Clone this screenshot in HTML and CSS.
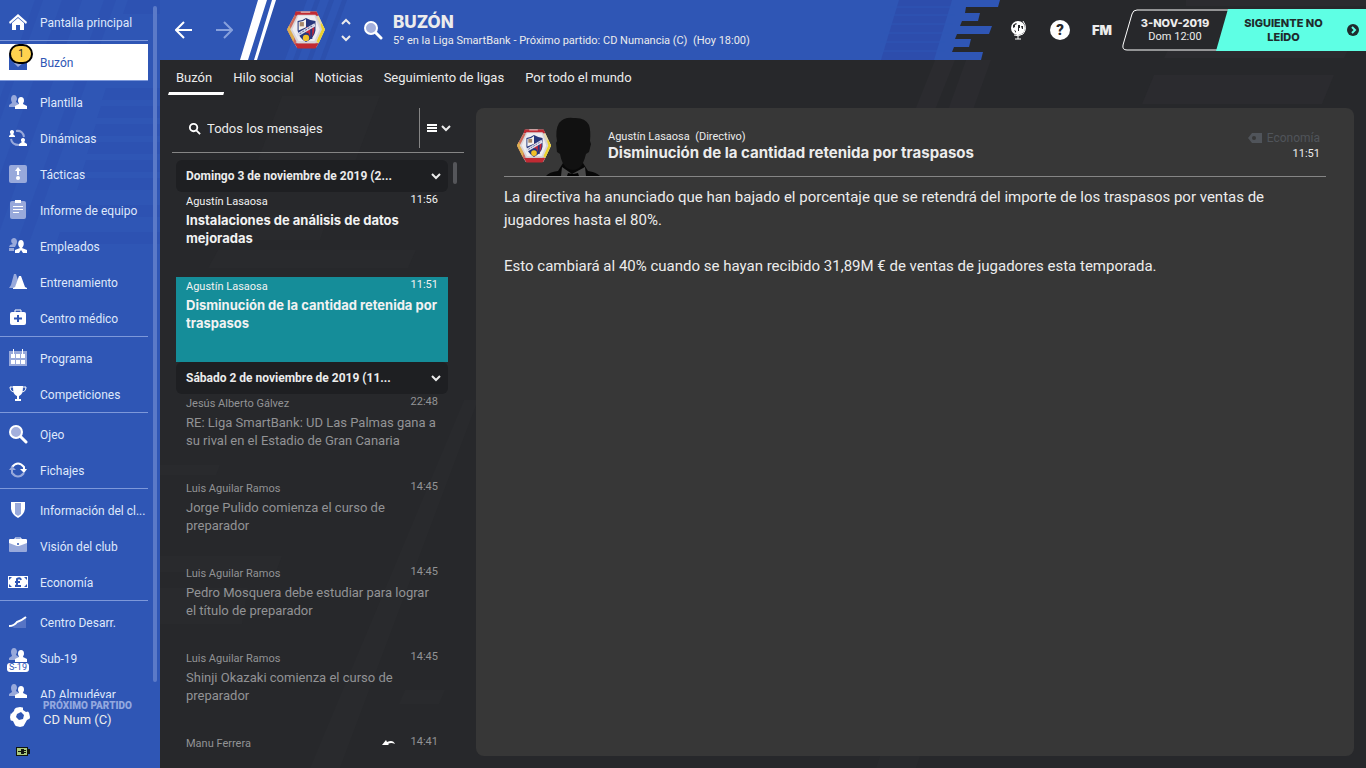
FILE: index.html
```html
<!DOCTYPE html>
<html lang="es">
<head>
    <meta charset="utf-8">
    <meta name="viewport" content="width=device-width, initial-scale=1">
    <title>Buzón</title>
    <link rel="stylesheet" href="styles.css">
</head>
<body>
    <!-- Shared symbols -->
    <svg class="symbols" aria-hidden="true">
        <symbol id="crest" viewBox="1 2 38 37">
            <path d="M11 3h19l8 17-8 17H11L2 20z" fill="#c9c4c4"/>
            <path d="M10 3h20l2 4H9z" fill="#c02a33"/>
            <path d="M15 3h9v1h-9z" fill="#ead9d6"/>
            <path d="M9 33h23l-3 5H12z" fill="#c02a33"/>
            <path d="M2 20l7-13 3 1-6 12 5 12-2 2z" fill="#cf6a5c"/>
            <path d="M2 20l2-4 2 4 3 8-1 4z" fill="#dcae4e"/>
            <path d="M32 7l6 13-6 13-3-1 6-12-5-12z" fill="#e6d9a8"/>
            <path d="M35 14l3 6-6 13-2-2 5-11-1-5z" fill="#ecd22f"/>
            <path d="M12 6h17l6 14-6 13H12L5 20z" fill="#d8d5da"/>
            <path d="M13 7h15l5 13-5 11H13L7 20z" fill="#efedf1"/>
            <path d="M12 12q4 0 8-3 5 3 9 3v9q-1 7-9 11-7-4-8-11z" fill="#27377c"/>
            <path d="M13 13q4 0 7-3v8l-7 3z" fill="#f5f2ef"/>
            <path d="M14 13h4v4h-4z" fill="#a7886a"/>
            <path d="M20 18h8q0 7-3 10l-3-5h-2z" fill="#c9283a"/>
            <path d="M25 19v10" stroke="#27377c" stroke-width="2"/>
            <path d="M11 24l17-10 1 3-17 10z" fill="#dfe1ee"/>
            <path d="M14 24l13-8" stroke="#68709c" stroke-dasharray="2 1"/>
            <circle cx="20" cy="28" r="3" fill="#f2bf27"/>
        </symbol>
        <symbol id="people" viewBox="0 0 20 20">
            <path d="M6 3c2 0 3 2 3 4 0 1-1 2-1 3l3 2v3H1v-2l3-2c0-1-1-2-1-4s1-4 3-4z" fill="#98a9db"/>
            <path d="M13 5c2 0 3 1 3 4 0 1-1 2-1 3l4 2v3H7v-3l4-2c0-1-1-2-1-3 0-3 1-4 3-4z" fill="#fff"/>
        </symbol>
        <symbol id="search" viewBox="0 0 20 20">
            <path d="M13 13l5 5" stroke="#fff" stroke-width="3" stroke-linecap="round"/>
            <circle cx="8" cy="8" r="6" fill="#a3afdc" stroke="#fff" stroke-width="2"/>
        </symbol>
        <symbol id="chevron" viewBox="0 0 12 12">
            <path d="M2 4l4 4 4-4" fill="none" stroke="currentColor" stroke-width="2"/>
        </symbol>
    </svg>

    <svg class="backdrop" viewBox="0 0 1366 768" preserveAspectRatio="none" aria-hidden="true">
        <g fill="#2b2b2f">
            <path d="M1154 75h180l-12 29h-180z"/>
            <path d="M1186 0h180v6h-180zM1168 50h180l-4 8h-180z"/>
            <path d="M935 60h20l-20 50h-20zM966 60h25l-18 50h-25z"/>
        </g>
        <g fill="#292a2d">
            <path d="M282 96h98l-34 90h-98zM218 250h198l-8 18H208zM220 210h110l-10 30H210z"/>
            <path d="M464 400h14L340 768h-30zM405 690h40l-6 14h-40z"/>
            <path d="M160 465h60l-4 10h-56zM160 556h122l-6 16H160zM160 588h88l-6 36h-82z"/>
            <path d="M880 756h40l-4 12h-40z"/>
        </g>
    </svg>

    <!-- Left menu -->
    <aside class="sidebar">
        <svg class="sidebar-pattern" viewBox="0 0 160 768" preserveAspectRatio="none" aria-hidden="true">
            <g fill="#2d52b2">
                <path d="M35 0h8L0 120V98zM62 0h20L0 230v-55zM104 0h12L30 240H18zM128 0h32v14h-37z"/>
                <path d="M106 88h54v12h-58zM101 106h59v12H97zM96 124h64v12H92zM91 142h69v12H87zM86 160h74v12H82zM81 178h79v12H77zM70 205h90v12H66zM60 232h100v12H56z"/>
            </g>
        </svg>
        <nav class="menu">
            <div class="menu-group">
                <a href="#"><svg class="icon" viewBox="0 0 20 20"><path d="M1 10l9-8 9 8-1 2-8-7-8 7z" fill="#fff"/><path d="M4 11l6-5 6 5v7h-4v-5H8v5H4z" fill="#fff"/></svg><span>Pantalla principal</span></a>
            </div>
            <div class="menu-group">
                <a href="#" class="current"><svg class="icon" viewBox="0 0 20 20"><path d="M1 3h18v15H1z" fill="#2f56b5"/><path d="M6 11l4 4 5-4z" fill="#98a9db"/></svg><b class="badge">1</b><span>Buzón</span></a>
            </div>
            <div class="menu-group">
                <a href="#"><svg class="icon"><use href="#people"/></svg><span>Plantilla</span></a>
                <a href="#"><svg class="icon" viewBox="0 0 20 20"><path d="M8 3q7-1 8 6M3 11q1 6 8 6" fill="none" stroke="#98a9db" stroke-width="2"/><path d="M4 2c3 0 2 4 1 4l2 2v1H1V8l2-2c-1 0-2-4 1-4zM15 10c3 0 2 4 1 4l3 2v2h-8v-2l3-2c-1 0-2-4 1-4z" fill="#fff"/></svg><span>Dinámicas</span></a>
                <a href="#"><svg class="icon" viewBox="0 0 20 20"><rect x="1" y="1" width="18" height="18" rx="2" fill="#98a9db"/><path d="M10 3l3 4h-2v4H9V7H7z" fill="#fff"/><circle cx="10" cy="14" r="2" fill="#fff"/></svg><span>Tácticas</span></a>
                <a href="#"><svg class="icon" viewBox="0 0 20 20"><rect x="2" y="1" width="16" height="18" rx="2" fill="#98a9db"/><path d="M7 0h6v3H7zM5 6h10v1H5zM5 9h10v1H5zM5 12h6v1H5z" fill="#fff"/></svg><span>Informe de equipo</span></a>
                <a href="#"><svg class="icon" viewBox="0 0 20 20"><path d="M6 2c3 0 4 4 2 7l-1 2H1l1-2 3-1C2 6 3 2 6 2zM1 12h5v3H1z" fill="#98a9db"/><path d="M13 4c3 0 4 5 1 8l5 2v3h-4l-2-3-2 3H7v-3l5-2c-3-3-2-8 1-8z" fill="#fff"/></svg><span>Empleados</span></a>
                <a href="#"><svg class="icon" viewBox="0 0 20 20"><path d="M6 2h2l2 6-3 8H1l2-3z" fill="#98a9db"/><path d="M11 4h2l4 11 2 1v1H5v-1l2-1z" fill="#fff"/></svg><span>Entrenamiento</span></a>
                <a href="#"><svg class="icon" viewBox="0 0 20 20"><path d="M7 5V2h6v3" fill="none" stroke="#fff"/><rect x="2" y="4" width="16" height="13" rx="2" fill="#fff"/><path d="M10 7v7M6 10.500h8" stroke="#2f56b5" stroke-width="2"/></svg><span>Centro médico</span></a>
            </div>
            <div class="menu-group">
                <a href="#"><svg class="icon" viewBox="0 0 20 20"><path d="M1 3h18v15H1z" fill="#98a9db"/><path d="M5 1h1v5H5zM14 1h1v5h-1zM3 6h4v4H3zM8 6h4v4H8zM13 6h4v4h-4zM3 12h4v4H3zM8 12h4v4H8zM13 12h4v4h-4z" fill="#fff"/></svg><span>Programa</span></a>
                <a href="#"><svg class="icon" viewBox="0 0 20 20"><path d="M5 2h10c0 6-1 9-4 10v3h2v2H7v-2h2v-3C6 11 5 8 5 2z" fill="#fff"/><path d="M5 3H2q0 5 5 5M15 3h3q0 5-5 5" fill="none" stroke="#fff"/></svg><span>Competiciones</span></a>
            </div>
            <div class="menu-group">
                <a href="#"><svg class="icon"><use href="#search"/></svg><span>Ojeo</span></a>
                <a href="#"><svg class="icon" viewBox="0 0 20 20"><path d="M4 7q6-7 12 0v4" fill="none" stroke="#fff" stroke-width="2"/><path d="M16 13q-6 7-12 0V9" fill="none" stroke="#98a9db" stroke-width="2"/><path d="M12 9h7l-3 4z" fill="#fff"/><path d="M1 10h7L4 6z" fill="#98a9db"/></svg><span>Fichajes</span></a>
            </div>
            <div class="menu-group">
                <a href="#"><svg class="icon" viewBox="0 0 20 20"><path d="M3 2h14v7q-1 6-7 9-6-3-7-9z" fill="#fff"/><path d="M7 3h6v11l-3 2-3-2z" fill="#98a9db"/></svg><span>Información del cl...</span></a>
                <a href="#"><svg class="icon" viewBox="0 0 20 20"><path d="M7 4V2h6v2" fill="none" stroke="#fff"/><rect x="1" y="3" width="18" height="13" rx="1" fill="#98a9db"/><path d="M1 4l1-1h16l1 1v3l-8 3H9L1 7z" fill="#fff"/><circle cx="10" cy="8" r="1" fill="#2f56b5"/></svg><span>Visión del club</span></a>
                <a href="#"><svg class="icon" viewBox="0 0 20 20"><path d="M0 4h20v12H0z" fill="#fff"/><path d="M1 5h3L1 8zM16 5h3v3zM1 12l3 3H1zM19 12v3h-3z" fill="#2f56b5"/><path d="M13 8q-1-3-4-1v5q0 2-2 2h6M7 10h5" fill="none" stroke="#2f56b5" stroke-width="2"/></svg><span>Economía</span></a>
            </div>
            <div class="menu-group">
                <a href="#"><svg class="icon" viewBox="0 0 20 20"><path d="M1 13l6-1 4-3 7-3v10H6z" fill="#5674c5"/><path d="M1 14q5 0 8-4 4-1 9-5" fill="none" stroke="#fff" stroke-width="2"/></svg><span>Centro Desarr.</span></a>
                <a href="#"><svg class="icon squad"><use href="#people"/></svg><small class="squad-tag">S-19</small><span>Sub-19</span></a>
                <a href="#"><svg class="icon squad"><use href="#people"/></svg><span>AD Almudévar</span></a>
            </div>
        </nav>
        <div class="menu-scroll"></div>
        <div class="next-match">
            <svg viewBox="0 0 22 22"><circle cx="11" cy="11" r="10" fill="#fff"/><path d="M8 8l4-2 3 3-1 4-4 1-3-3zM1 5l5-4-1 4-3 3zM14 0l7 5-4 1-3-2zM0 14l4 1 3 6-5-3zM18 14l4-2-3 7-5 2z" fill="#2f56b5"/></svg>
            <div>
                <h2>PRÓXIMO PARTIDO</h2>
                <p>CD Num (C)</p>
            </div>
        </div>
        <svg class="battery" viewBox="0 0 14 10"><path d="M0 0h12v2h2v5h-2v2H0z" fill="#11150d"/><path d="M1 1h10v7H1z" fill="#a9c77c"/><path d="M2 4h3V2h3v5H5V5H2zM8 3h2v1H8zM8 5h2v1H8z" fill="#11150d"/></svg>
    </aside>

    <div class="page">
        <!-- Top bar -->
        <header class="topbar">
            <svg class="topbar-pattern" width="840" height="60" viewBox="0 0 840 60" aria-hidden="true">
                <path d="M0 0h840l-2 7h-32l-1 6h15l-2 8h-16l-2 5h32l-3 8h-32l-2 5h16l-2 8h-15l-2 5h31l-2 8H0z" fill="#2f56b5"/>
                <path d="M115 0h32l-22 60H93zM155 0h5l-22 60h-5zM169 0h5l-22 60h-5zM182 0h5l-22 60h-5z" fill="#2c50ad"/>
                <path d="M739 0h53l-18 60h-53z" fill="#2d4dac"/>
                <path d="M730 7h65M730 15h65M728 24h65M724 33h65M720 42h65M720 51h65" stroke="#2f56b5"/>
                <path d="M98 0h9L88 60h-8zM112 0h4L97 60h-3z" fill="#fff"/>
            </svg>
            <div class="history">
                <button aria-label="Atrás"><svg viewBox="0 0 18 18"><path d="M17 9H2M9 1L1 9l8 8" fill="none" stroke="#fff" stroke-width="2"/></svg></button>
                <button aria-label="Adelante"><svg viewBox="0 0 18 18"><path d="M1 9h15M9 1l8 8-8 8" fill="none" stroke="#86a0dc" stroke-width="2"/></svg></button>
            </div>
            <svg class="club-crest"><use href="#crest"/></svg>
            <div class="club-switch">
                <button class="up" aria-label="Anterior"><svg><use href="#chevron"/></svg></button>
                <button aria-label="Siguiente"><svg><use href="#chevron"/></svg></button>
            </div>
            <button class="search-button" aria-label="Buscar"><svg><use href="#search"/></svg></button>
            <div class="heading">
                <h1>BUZÓN</h1>
                <p>5º en la Liga SmartBank - Próximo partido: CD Numancia (C)&nbsp; (Hoy 18:00)</p>
            </div>
            <div class="tools">
                <button aria-label="Mundo"><svg viewBox="0 0 20 20"><circle cx="10" cy="8" r="7" fill="#fff"/><path d="M5 5l3-2 1 1-2 1v2L5 8zM10 5h2v3h-1v3h-1zM13 6h2v3h-1zM6 10l2 1v2z" fill="#27282b"/><path d="M15 1q5 7 0 13-5 3-9 1M10 15v4M7 19h6" fill="none" stroke="#fff"/></svg></button>
                <button class="help" aria-label="Ayuda">?</button>
                <button class="fm">FM</button>
            </div>
            <div class="continue">
                <svg class="date-frame" viewBox="0 0 106 42" preserveAspectRatio="none" aria-hidden="true"><path d="M106 1H15q-4 0-5 4L1 36q-1 5 4 5h101" fill="#27282b" stroke="#fff"/></svg>
                <div class="date">
                    <strong>3-NOV-2019</strong>
                    <span>Dom 12:00</span>
                </div>
                <button class="next-unread">
                    <span>SIGUIENTE NO LEÍDO</span>
                    <svg viewBox="0 0 12 12"><circle cx="6" cy="6" r="6" fill="#1f2b2c"/><path d="M5 3l3 3-3 3" fill="none" stroke="#5effe4" stroke-width="2"/></svg>
                </button>
            </div>
        </header>

        <nav class="tabs">
            <a href="#" class="active">Buzón</a>
            <a href="#">Hilo social</a>
            <a href="#">Noticias</a>
            <a href="#">Seguimiento de ligas</a>
            <a href="#">Por todo el mundo</a>
        </nav>

        <main class="content">
            <!-- Message list -->
            <section class="inbox">
                <div class="filter">
                    <label for="filter-input" aria-label="Filtrar mensajes"><svg viewBox="0 0 14 14"><circle cx="6" cy="6" r="4" fill="none" stroke="#fff" stroke-width="2"/><path d="M9 9l4 4" stroke="#fff" stroke-width="2"/></svg></label>
                    <input id="filter-input" type="text" value="Todos los mensajes">
                    <button aria-label="Opciones"><svg viewBox="0 0 10 10"><path d="M0 2h10M0 5h10M0 8h10" stroke="#fff" stroke-width="2"/></svg><svg class="chevron"><use href="#chevron"/></svg></button>
                </div>
                <div class="inbox-body">
                    <div class="messages">
                        <button class="day"><span>Domingo 3 de noviembre de 2019 (2...</span><svg><use href="#chevron"/></svg></button>
                        <a href="#" class="message unread">
                            <div class="meta"><span>Agustín Lasaosa</span><time>11:56</time></div>
                            <h3>Instalaciones de análisis de datos mejoradas</h3>
                        </a>
                        <a href="#" class="message unread selected">
                            <div class="meta"><span>Agustín Lasaosa</span><time>11:51</time></div>
                            <h3>Disminución de la cantidad retenida por traspasos</h3>
                        </a>
                        <button class="day"><span>Sábado 2 de noviembre de 2019 (11...</span><svg><use href="#chevron"/></svg></button>
                        <a href="#" class="message">
                            <div class="meta"><span>Jesús Alberto Gálvez</span><time>22:48</time></div>
                            <h3>RE: Liga SmartBank: UD Las Palmas gana a su rival en el Estadio de Gran Canaria</h3>
                        </a>
                        <a href="#" class="message">
                            <div class="meta"><span>Luis Aguilar Ramos</span><time>14:45</time></div>
                            <h3>Jorge Pulido comienza el curso de preparador</h3>
                        </a>
                        <a href="#" class="message">
                            <div class="meta"><span>Luis Aguilar Ramos</span><time>14:45</time></div>
                            <h3>Pedro Mosquera debe estudiar para lograr el título de preparador</h3>
                        </a>
                        <a href="#" class="message">
                            <div class="meta"><span>Luis Aguilar Ramos</span><time>14:45</time></div>
                            <h3>Shinji Okazaki comienza el curso de preparador</h3>
                        </a>
                        <a href="#" class="message">
                            <div class="meta"><span>Manu Ferrera</span><svg viewBox="0 0 14 8"><path d="M0 6l4-5 1 2q6-3 8 2-4-2-7 0l1 1z" fill="#fff"/></svg><time>14:41</time></div>
                        </a>
                    </div>
                    <div class="inbox-scroll"></div>
                </div>
            </section>

            <!-- Open message -->
            <article class="reader">
                <header class="reader-head">
                    <svg class="sender-crest"><use href="#crest"/></svg>
                    <svg class="portrait" viewBox="0 0 54 60">
                        <path d="M0 60q3-4 12-5l5-8h20l5 8q8 1 12 5z" fill="#080808"/>
                        <path d="M16 51l10 7 13-7 1 9H15z" fill="#4a4a4a"/>
                        <path d="M27 2q12-1 16 7 2 6 1 16l1 3-2 8-3 2q-3 12-7 14-6 4-12 0-5-3-7-14l-3-2-1-9 1-2q-2-11 2-18 5-6 14-5z" fill="#111"/>
                        <path d="M22 57l5 1 5-1 1 3H21z" fill="#000"/>
                    </svg>
                    <div class="reader-title">
                        <p>Agustín Lasaosa&nbsp; (Directivo)</p>
                        <h2>Disminución de la cantidad retenida por traspasos</h2>
                    </div>
                    <div class="reader-info">
                        <span class="tag"><svg viewBox="0 0 14 10"><path d="M4 0h10v10H4L0 5z" fill="#50545a"/><circle cx="6" cy="5" r="2" fill="#373737"/></svg>Economía</span>
                        <time>11:51</time>
                    </div>
                </header>
                <div class="reader-text">
                    <p>La directiva ha anunciado que han bajado el porcentaje que se retendrá del importe de los traspasos por ventas de jugadores hasta el 80%.</p>
                    <p>Esto cambiará al 40% cuando se hayan recibido 31,89M € de ventas de jugadores esta temporada.</p>
                </div>
            </article>
        </main>
    </div>
</body>
</html>
```
FILE: styles.css
```css
* {
    box-sizing: border-box;
}

body {
    margin: 0;
    display: flex;
    height: 100vh;
    overflow: hidden;
    font-family: Roboto, "Liberation Sans", sans-serif;
    font-size: 12px;
    color: #ececec;
    background-color: #27282b;
}

h1, h2, h3, p {
    margin: 0;
}

/* Wide bold face for titles */
h1, h3, .reader-title h2, .date strong, .next-unread, .fm {
    font-family: Inter, "Liberation Sans", sans-serif;
}

a {
    color: inherit;
    text-decoration: none;
}

button {
    padding: 0;
    border: none;
    background: none;
    color: inherit;
    font: inherit;
    cursor: pointer;
}

svg {
    display: block;
    flex: none;
}

.symbols {
    position: absolute;
    width: 0;
    height: 0;
}

.backdrop {
    position: absolute;
    z-index: -1;
    width: 100%;
    height: 100%;
}

/* Left menu */
.sidebar {
    position: relative;
    flex: none;
    display: flex;
    flex-direction: column;
    width: 160px;
    background-color: #2f56b5;
}

.sidebar-pattern {
    position: absolute;
    width: 100%;
    height: 100%;
}

.menu {
    position: relative;
    flex: 1;
    min-height: 0;
    width: 148px;
    padding-top: 4px;
    overflow: hidden;
}

.menu-group {
    margin-bottom: 3px;
    border-bottom: 1px solid #7d98da;
}

.menu a {
    position: relative;
    display: flex;
    align-items: center;
    gap: 12px;
    height: 36px;
    padding-left: 8px;
    color: #dfe8fb;
}

.menu a span {
    padding-top: 2px;
    white-space: nowrap;
}

.menu a.current {
    background-color: #fff;
    color: #2f56b5;
}

.icon {
    width: 20px;
    height: 20px;
}

.squad {
    margin-bottom: 6px;
}

.badge {
    position: absolute;
    top: 0;
    left: 9px;
    width: 24px;
    height: 20px;
    border: 2px solid #000;
    border-radius: 10px;
    background-color: #ffd34f;
    color: #222;
    font-size: 10px;
    font-weight: normal;
    line-height: 16px;
    text-align: center;
}

.squad-tag {
    position: absolute;
    left: 7px;
    bottom: 4px;
    width: 22px;
    border-radius: 3px;
    background-color: #fff;
    color: #2f56b5;
    font-size: 9px;
    line-height: 9px;
    text-align: center;
}

.menu-scroll {
    position: absolute;
    top: 6px;
    right: 3px;
    bottom: 86px;
    width: 4px;
    border-radius: 2px;
    background-color: #5b7ac8;
}

.next-match {
    position: relative;
    display: flex;
    align-items: center;
    gap: 12px;
    padding-left: 9px;
}

.next-match svg {
    width: 22px;
    height: 22px;
    margin-top: 8px;
}

.next-match h2 {
    font-size: 10px;
    font-weight: 900;
    line-height: 13px;
    color: #93a8df;
}

.next-match p {
    font-size: 13px;
    line-height: 16px;
}

.battery {
    position: relative;
    width: 14px;
    height: 10px;
    margin: 19px 0 11px 16px;
}

.page {
    flex: 1;
    min-width: 0;
    display: flex;
    flex-direction: column;
}

/* Top bar */
.topbar {
    position: relative;
    display: flex;
    align-items: center;
    height: 60px;
}

.topbar > * {
    position: relative;
}

.topbar > .topbar-pattern {
    position: absolute;
    left: 0;
    top: 0;
}

.history {
    display: flex;
    gap: 22px;
    padding-left: 15px;
}

.history svg {
    width: 18px;
    height: 18px;
}

.club-crest {
    width: 40px;
    height: 40px;
    margin-left: 53px;
}

.club-switch {
    display: flex;
    flex-direction: column;
    gap: 2px;
    margin-left: 14px;
}

.club-switch svg {
    width: 12px;
    height: 14px;
}

.club-switch .up {
    transform: rotate(180deg);
}

.search-button {
    margin-left: 11px;
}

.search-button svg {
    width: 20px;
    height: 20px;
}

.heading {
    flex: 1;
    min-width: 0;
    margin-left: 10px;
    white-space: nowrap;
}

.heading h1 {
    font-size: 17px;
    font-weight: 800;
    line-height: 22px;
}

.heading p {
    font-size: 11px;
    line-height: 16px;
}

.tools {
    display: flex;
    align-items: center;
    gap: 22px;
    margin-right: 10px;
}

.tools svg {
    width: 20px;
    height: 20px;
}

.help {
    width: 20px;
    height: 20px;
    border-radius: 10px;
    background-color: #fff;
    color: #27282b;
    font-size: 15px;
    font-weight: 900;
}

.fm {
    font-size: 13px;
    font-weight: 900;
}

.continue {
    display: flex;
    height: 42px;
}

.date-frame {
    position: absolute;
    left: 0;
    width: 106px;
    height: 42px;
}

.date {
    position: relative;
    display: flex;
    flex-direction: column;
    justify-content: center;
    width: 106px;
    text-align: center;
    line-height: 14px;
    font-size: 11px;
}

.date strong {
    font-weight: 800;
}

.next-unread {
    position: relative;
    display: flex;
    align-items: center;
    gap: 14px;
    width: 150px;
    margin-left: -12px;
    padding: 0 7px 0 18px;
    background-color: #5effe4;
    clip-path: polygon(12px 0, 100% 0, 100% 100%, 0 100%);
    color: #1f2b2c;
    font-size: 11px;
    font-weight: 800;
    line-height: 14px;
}

.next-unread span {
    flex: 1;
}

.next-unread svg {
    width: 12px;
    height: 12px;
}

/* Tabs */
.tabs {
    display: flex;
    gap: 21px;
    height: 36px;
    padding-left: 16px;
    font-size: 13px;
    line-height: 35px;
}

.tabs a {
    position: relative;
}

.tabs .active::after {
    content: "";
    position: absolute;
    left: -8px;
    right: -12px;
    bottom: 1px;
    height: 3px;
    background-color: #fff;
    clip-path: polygon(1px 0, 100% 0, calc(100% - 1px) 100%, 0 100%);
}

.content {
    flex: 1;
    min-height: 0;
    display: flex;
    gap: 12px;
    padding: 12px;
}

/* Message list */
.inbox {
    flex: none;
    display: flex;
    flex-direction: column;
    width: 292px;
    margin-bottom: -12px;
}

.filter {
    display: flex;
    align-items: center;
    gap: 6px;
    height: 45px;
    padding: 0 12px 4px 16px;
    border-bottom: 1px solid #858585;
}

.filter svg {
    width: 13px;
    height: 13px;
}

.filter input {
    flex: 1;
    min-width: 0;
    padding: 0;
    border: none;
    outline: none;
    background: none;
    color: inherit;
    font: inherit;
    font-size: 13px;
}

.filter button {
    display: flex;
    align-items: center;
    gap: 3px;
    height: 40px;
    padding-left: 7px;
    border-left: 1px solid #858585;
}

.filter button svg {
    width: 10px;
    height: 10px;
}

.filter button .chevron {
    width: 12px;
    height: 12px;
}

.inbox-body {
    flex: 1;
    min-height: 0;
    display: flex;
    gap: 5px;
    padding: 7px 0 0 4px;
}

.messages {
    width: 272px;
    overflow: hidden;
}

.inbox-scroll {
    width: 4px;
    height: 22px;
    margin-top: 2px;
    border-radius: 2px;
    background-color: #55565a;
}

.day {
    display: flex;
    align-items: center;
    justify-content: space-between;
    width: 100%;
    height: 32px;
    padding: 0 6px 0 10px;
    border-radius: 6px;
    background-color: #1e1f22;
    font-size: 12px;
    font-weight: 700;
}

.day svg {
    width: 12px;
    height: 12px;
}

.message {
    display: block;
    height: 85px;
    padding: 1px 10px 0;
    color: #929395;
}

.meta {
    display: flex;
    font-size: 11px;
    line-height: 14px;
}

.meta span {
    flex: 1;
    padding-top: 2px;
}

.meta svg {
    width: 14px;
    height: 8px;
    margin: 4px 15px 0 0;
}

.message h3 {
    margin-top: 3px;
    font-family: Roboto, "Liberation Sans", sans-serif;
    font-size: 13px;
    font-weight: 400;
    line-height: 18px;
}

.unread {
    color: #f2f2f2;
}

.message.unread h3 {
    margin-top: 2px;
    font-family: Inter, "Liberation Sans", sans-serif;
    font-weight: 700;
}

.selected {
    background-color: #158d99;
}

/* Open message */
.reader {
    flex: 1;
    min-width: 0;
    padding: 8px 28px;
    border-radius: 8px;
    background-color: #373737;
}

.reader-head {
    display: flex;
    align-items: center;
    height: 61px;
    border-bottom: 1px solid #858585;
}

.sender-crest {
    width: 36px;
    height: 36px;
    margin-left: 12px;
}

.portrait {
    align-self: flex-end;
    width: 54px;
    height: 60px;
    margin-left: -6px;
}

.reader-title {
    flex: 1;
    padding-left: 8px;
}

.reader-title p {
    font-size: 11px;
    line-height: 14px;
}

.reader-title h2 {
    font-size: 15px;
    line-height: 18px;
}

.reader-info {
    padding-right: 6px;
    font-size: 11px;
    line-height: 16px;
    text-align: right;
}

.reader-info time {
    display: block;
}

.tag {
    display: flex;
    align-items: center;
    gap: 5px;
    color: #50545a;
    font-size: 12px;
}

.tag svg {
    width: 14px;
    height: 10px;
}

.reader-text {
    padding-top: 9px;
    font-size: 15px;
    line-height: 23px;
}

.reader-text p {
    margin-bottom: 23px;
}
```
